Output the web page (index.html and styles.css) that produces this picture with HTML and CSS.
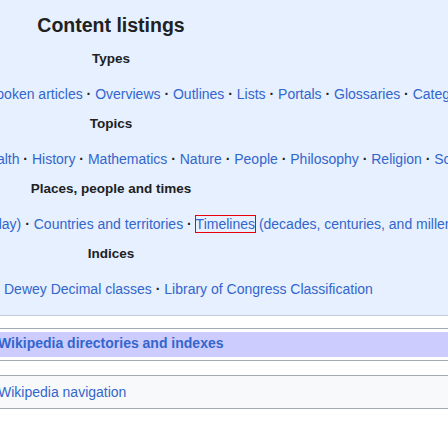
FILE: index.html
```html
<!DOCTYPE html>
<html lang="en">
<head>
<meta charset="utf-8">
<title>Content listings</title>
<link rel="stylesheet" href="styles.css">
</head>
<body>
<div class="page">
  <section class="contents">
    <h2 class="contents-title">Content listings</h2>
    <div class="group">
      <h3 class="group-title">Types</h3>
      <ul class="hlist hlist-types">
        <li><a href="#">Spoken articles</a></li>
        <li><a href="#">Overviews</a></li>
        <li><a href="#">Outlines</a></li>
        <li><a href="#">Lists</a></li>
        <li><a href="#">Portals</a></li>
        <li><a href="#">Glossaries</a></li>
        <li><a href="#">Categories</a></li>
        <li><a href="#">Indices</a></li>
      </ul>
    </div>
    <div class="group">
      <h3 class="group-title">Topics</h3>
      <ul class="hlist hlist-topics">
        <li><a href="#">Health</a></li>
        <li><a href="#">History</a></li>
        <li><a href="#">Mathematics</a></li>
        <li><a href="#">Nature</a></li>
        <li><a href="#">People</a></li>
        <li><a href="#">Philosophy</a></li>
        <li><a href="#">Religion</a></li>
        <li><a href="#">Society</a></li>
        <li><a href="#">Technology</a></li>
      </ul>
    </div>
    <div class="group">
      <h3 class="group-title">Places, people and times</h3>
      <ul class="hlist hlist-places">
        <li><a href="#">Calendar (today)</a></li>
        <li><a href="#">Countries and territories</a></li>
        <li><a href="#" class="marked">Timelines</a> <a href="#">(decades, centuries, and millennia)</a></li>
      </ul>
    </div>
    <div class="group">
      <h3 class="group-title">Indices</h3>
      <ul class="hlist hlist-indices">
        <li><a href="#">Dewey Decimal classes</a></li>
        <li><a href="#">Library of Congress Classification</a></li>
      </ul>
    </div>
  </section>

  <nav class="navbox">
    <div class="navbox-title"><a href="#">Wikipedia directories and indexes</a></div>
  </nav>

  <nav class="navbox navbox-plain">
    <div class="navbox-row"><a href="#">Wikipedia navigation</a></div>
  </nav>
</div>
</body>
</html>
```
FILE: styles.css
```css
html, body {
  margin: 0;
  padding: 0;
  overflow: hidden;
  background: #ffffff;
}

body {
  font-family: "Liberation Sans", Arial, sans-serif;
  font-size: 14px;
  color: #202122;
}

a {
  color: #3366cc;
  text-decoration: none;
}

.page {
  width: 448px;
}

.contents {
  background: #e6f0ff;
  padding: 13px 0 16px;
  border-bottom: 1px solid #c3cbd8;
}

.contents-title {
  width: 222px;
  margin: 0 0 12px;
  text-align: center;
  font-size: 19.5px;
  line-height: 24px;
  font-weight: bold;
}

.group {
  margin-bottom: 10px;
}

.group:last-child {
  margin-bottom: 0;
}

.group-title {
  width: 222px;
  margin: 0 0 15px;
  text-align: center;
  font-size: 13.5px;
  line-height: 20px;
  font-weight: bold;
}

.hlist {
  list-style: none;
  margin: 0;
  padding: 0;
  display: flex;
  white-space: nowrap;
  line-height: 20px;
}

.hlist li {
  flex: none;
}

.hlist li:not(:last-child)::after {
  content: "\00a0·\00a0";
  font-weight: bold;
  color: #202122;
}

.hlist-types { margin-left: -13px; }
.hlist-topics { margin-left: -21px; }
.hlist-places { margin-left: -83px; }
.hlist-indices { margin-left: 4px; }

.marked {
  outline: 1px solid #e8000d;
}

.navbox {
  margin-top: 12px;
  width: 600px;
  border-top: 1px solid #a2a9b1;
  border-bottom: 1px solid #a2a9b1;
  padding: 3px 0;
}

.navbox-title {
  background: #ccccff;
  font-weight: bold;
  line-height: 23px;
  padding: 0 0 2px;
  margin-left: -2px;
  white-space: nowrap;
}

.navbox-plain {
  margin-top: 14px;
  padding: 0;
  background: #f8f9fa;
}

.navbox-row {
  line-height: 32px;
  margin-left: -2px;
  white-space: nowrap;
}
```
